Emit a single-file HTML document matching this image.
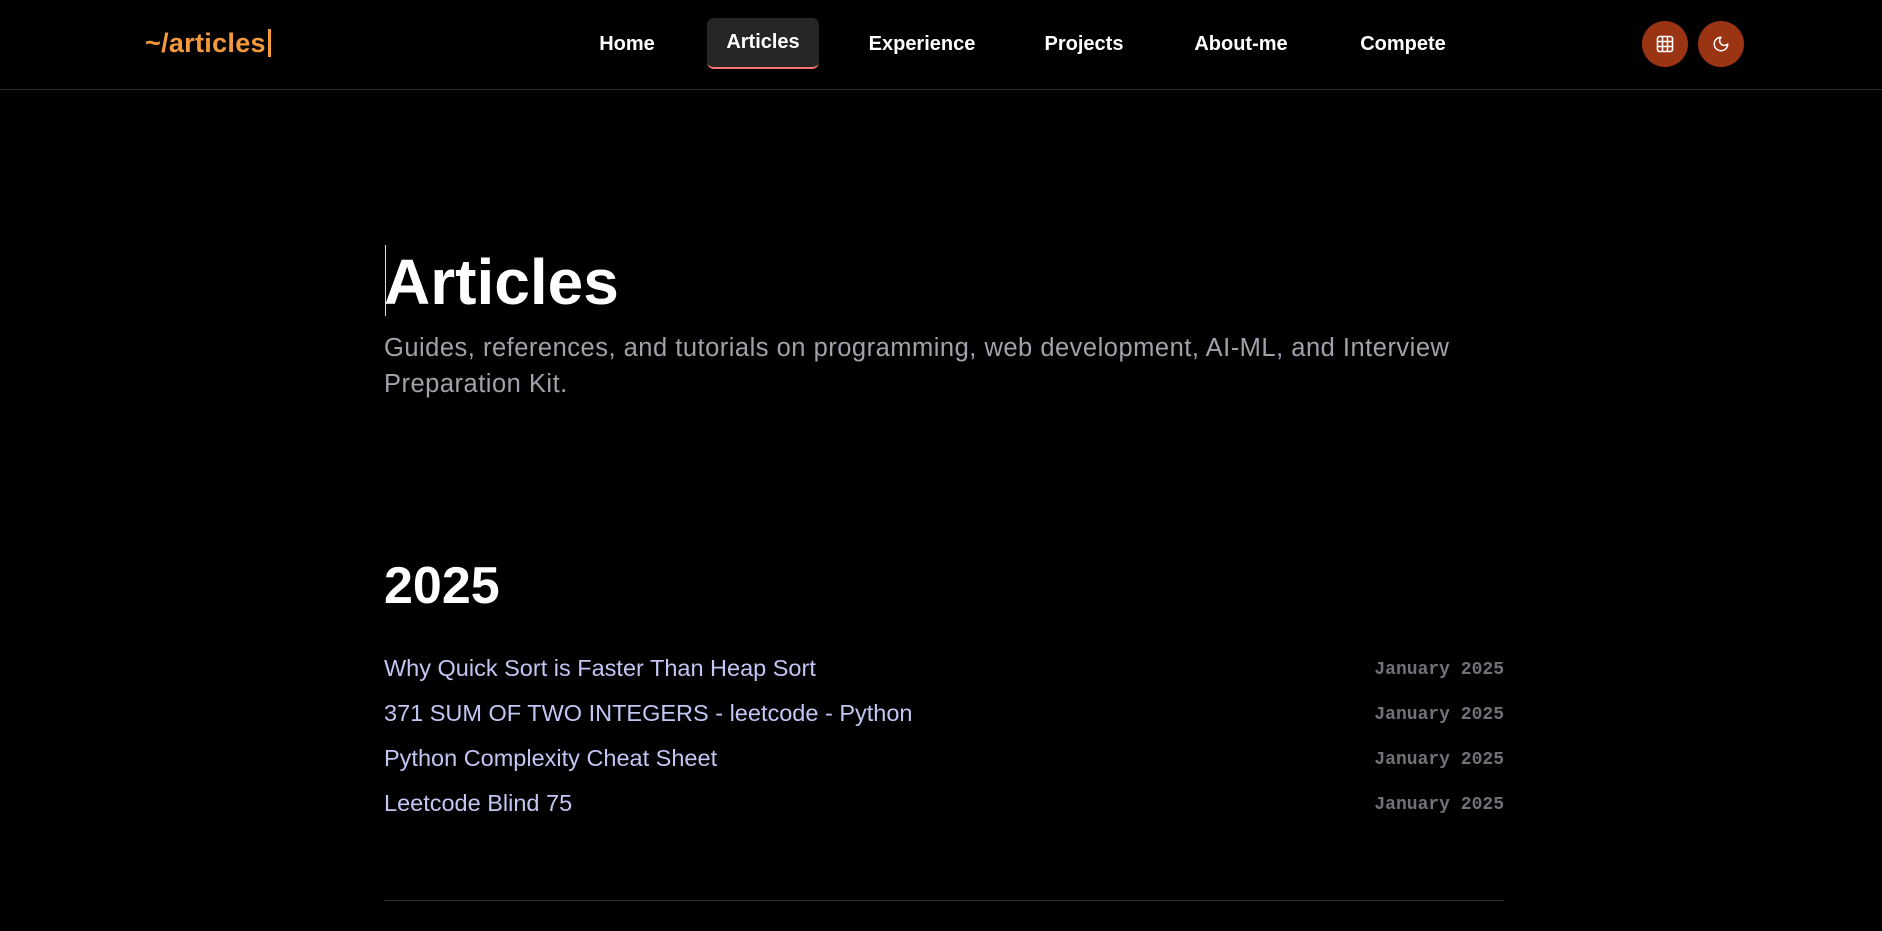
<!DOCTYPE html>
<html><head><meta charset="utf-8"><style>
*{margin:0;padding:0;box-sizing:border-box}
body{width:1882px;height:931px;background:#000;color:#fff;font-family:"Liberation Sans",sans-serif;overflow:hidden;position:relative}
.hdr{position:absolute;left:0;top:0;width:1882px;height:90px;border-bottom:1px solid #2a2a2a}
.logo{position:absolute;left:145px;top:28px;font-size:27px;font-weight:700;color:#f59a3c;letter-spacing:0.3px}
.logo span{display:inline-block;width:3px;height:28px;background:#f59a3c;vertical-align:-5px;margin-left:2px}
.nav a{position:absolute;top:33px;font-size:20px;font-weight:700;color:#fff;text-decoration:none;transform:translateX(-50%)}
.act{position:absolute;left:707px;top:18px;width:112px;height:51px;background:#262626;border-radius:7px;border-bottom:2px solid #f87171}
.btn{position:absolute;top:21px;width:46px;height:46px;border-radius:50%;background:#9a3412;display:flex;align-items:center;justify-content:center}
h1{position:absolute;left:384px;top:242px;font-size:64px;font-weight:700;line-height:80px}
.cur{position:absolute;left:385px;top:245px;width:1px;height:71px;background:#ddd}
.sub{position:absolute;left:384px;top:330px;width:1110px;font-size:25.5px;letter-spacing:0.5px;line-height:36px;color:#a1a1aa}
h2{position:absolute;left:384px;top:556px;font-size:52px;font-weight:700;line-height:60px}
.row{position:absolute;left:384px;width:1120px;height:40px;display:flex;justify-content:space-between;align-items:center}
.row a{color:#c3c5f3;font-size:23.5px;text-decoration:none}
.row span{font-family:"Liberation Mono",monospace;font-size:18px;font-weight:700;color:#71717a;position:relative;top:2px}
.hr{position:absolute;left:384px;top:900px;width:1120px;height:1px;background:#333}
</style></head><body>
<div class="hdr">
<div class="logo">~/articles<span></span></div>
<div class="act"></div>
<div class="nav">
<a style="left:627px">Home</a>
<a style="left:763px;top:31px">Articles</a>
<a style="left:922px">Experience</a>
<a style="left:1084px">Projects</a>
<a style="left:1241px">About-me</a>
<a style="left:1403px">Compete</a>
</div>
<div class="btn" style="left:1642px"><svg width="18" height="18" viewBox="0 0 18 18" fill="none" stroke="#fff" stroke-width="1.6"><rect x="1.5" y="1.5" width="15" height="15" rx="2"/><path d="M6.5 1.5v15M11.5 1.5v15M1.5 6.5h15M1.5 11.5h15"/></svg></div>
<div class="btn" style="left:1698px"><svg width="18" height="18" viewBox="0 0 24 24" fill="none" stroke="#fff" stroke-width="2" stroke-linecap="round" stroke-linejoin="round"><path d="M12 3a6 6 0 0 0 9 9 9 9 0 1 1-9-9Z"/></svg></div>
</div>
<div class="cur"></div>
<h1>Articles</h1>
<div class="sub">Guides, references, and tutorials on programming, web development, AI-ML, and Interview Preparation Kit.</div>
<h2>2025</h2>
<div class="row" style="top:648px"><a>Why Quick Sort is Faster Than Heap Sort</a><span>January 2025</span></div>
<div class="row" style="top:693px"><a>371 SUM OF TWO INTEGERS - leetcode - Python</a><span>January 2025</span></div>
<div class="row" style="top:738px"><a>Python Complexity Cheat Sheet</a><span>January 2025</span></div>
<div class="row" style="top:783px"><a>Leetcode Blind 75</a><span>January 2025</span></div>
<div class="hr"></div>
</body></html>
